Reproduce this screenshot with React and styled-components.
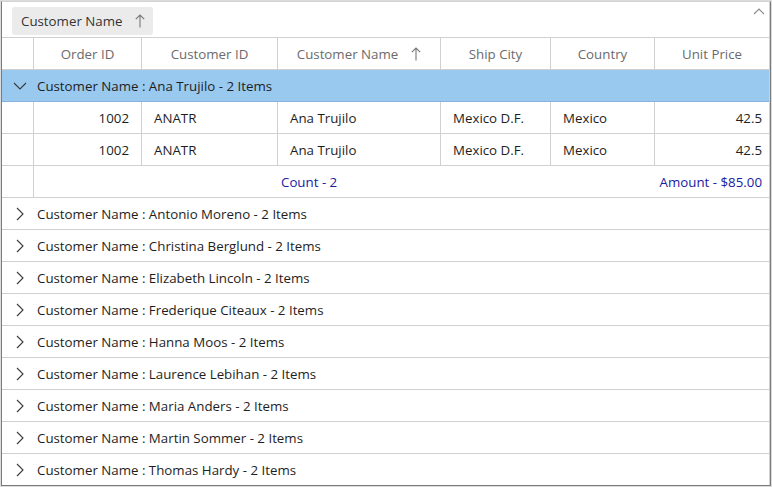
import React from "react";
import styled, { createGlobalStyle } from "styled-components";

const GlobalStyle = createGlobalStyle`
  html, body {
    margin: 0;
    padding: 0;
    background: #ffffff;
  }
  body {
    font-family: "Open Sans", "Noto Sans", sans-serif;
  }
`;

const COLUMNS = "32px 108px 136px 163px 110px 104px 114px";

const columns = [
  { key: "orderId", title: "Order ID", align: "right" },
  { key: "customerId", title: "Customer ID", align: "left" },
  { key: "customerName", title: "Customer Name", align: "left", sorted: true },
  { key: "shipCity", title: "Ship City", align: "left" },
  { key: "country", title: "Country", align: "left" },
  { key: "unitPrice", title: "Unit Price", align: "right" },
];

const groups = [
  "Ana Trujilo",
  "Antonio Moreno",
  "Christina Berglund",
  "Elizabeth Lincoln",
  "Frederique Citeaux",
  "Hanna Moos",
  "Laurence Lebihan",
  "Maria Anders",
  "Martin Sommer",
  "Thomas Hardy",
];

const expandedRows = [
  { orderId: 1002, customerId: "ANATR", customerName: "Ana Trujilo", shipCity: "Mexico D.F.", country: "Mexico", unitPrice: "42.5" },
  { orderId: 1002, customerId: "ANATR", customerName: "Ana Trujilo", shipCity: "Mexico D.F.", country: "Mexico", unitPrice: "42.5" },
];

const Frame = styled.div`
  width: 772px;
  height: 487px;
  box-sizing: border-box;
  border: 1px solid #dcdcdc;
  overflow: hidden;
`;

const Inner = styled.div`
  height: 100%;
  box-sizing: border-box;
  border-left: 1px solid #7a7a7a;
  border-right: 1px solid #7a7a7a;
  border-bottom: 1px solid #7a7a7a;
  border-top: 1px solid #d4d4d4;
  overflow: hidden;
  display: flex;
  flex-direction: column;
`;

const Body = styled.div`
  flex: 1;
  overflow: hidden;
  border-right: 1px solid #d0d0d0;
`;

const GroupDropArea = styled.div`
  height: 36px;
  flex-shrink: 0;
  box-sizing: border-box;
  border-bottom: 1px solid #d0d0d0;
  border-right: 1px solid #d0d0d0;
  display: flex;
  align-items: flex-start;
  padding: 5px 0 0 10px;
  position: relative;
`;

const GroupChip = styled.div`
  height: 28px;
  box-sizing: border-box;
  padding: 0 8px 0 9px;
  display: flex;
  align-items: center;
  gap: 13px;
  background: #ebebeb;
  border-radius: 3px;
  color: #333333;
  font-size: 13.3px;
`;

const CollapseCaret = styled.svg`
  position: absolute;
  top: 6px;
  right: 4px;
`;

const Row = styled.div`
  display: grid;
  grid-template-columns: ${COLUMNS};
  height: 32px;
  box-sizing: border-box;
  border-bottom: 1px solid #d0d0d0;
`;

const HeaderCell = styled.div`
  display: flex;
  align-items: center;
  justify-content: center;
  gap: 13px;
  color: #6b6b6b;
  font-size: 13.3px;
  border-right: 1px solid #d0d0d0;
  &:last-child {
    border-right: none;
  }
`;

const IndentCell = styled.div`
  border-right: 1px solid #d0d0d0;
`;

const Cell = styled.div`
  display: flex;
  align-items: center;
  justify-content: ${(p) => (p.$align === "right" ? "flex-end" : "flex-start")};
  padding: ${(p) => (p.$align === "right" ? "0 12px 0 0" : "0 0 0 12px")};
  color: #1e1e1e;
  font-size: 13.3px;
  border-right: 1px solid #d0d0d0;
  &:last-child {
    border-right: none;
    padding-right: 7px;
  }
`;

const SummaryRow = styled(Row)`
  color: #1a1aa5;
  font-size: 13.3px;
`;

const SummaryCount = styled.div`
  grid-column: 4 / 5;
  display: flex;
  align-items: center;
  padding-left: 3px;
`;

const SummaryAmount = styled.div`
  grid-column: 6 / 8;
  display: flex;
  align-items: center;
  justify-content: flex-end;
  padding-right: 7px;
`;

const GroupRow = styled.div`
  height: 32px;
  box-sizing: border-box;
  display: flex;
  align-items: center;
  background: ${(p) => (p.$selected ? "#99c9ee" : "#ffffff")};
  border-bottom: 1px solid ${(p) => (p.$selected ? "#86b2dc" : "#d0d0d0")};
  color: #1e1e1e;
  font-size: 13.3px;
`;

const Toggle = styled.span`
  width: 35px;
  display: flex;
  align-items: center;
  justify-content: center;
  flex-shrink: 0;
`;

const SortArrow = () => (
  <svg width="10" height="14" viewBox="0 0 10 14" fill="none" stroke="#777" strokeWidth="1.1">
    <path d="M5 13.5V1M0.8 5.2L5 1l4.2 4.2" />
  </svg>
);

const Chevron = ({ open }) =>
  open ? (
    <svg width="14" height="8" viewBox="0 0 14 8" fill="none" stroke="#3a3a3a" strokeWidth="1.1">
      <path d="M1 1l6 6 6-6" />
    </svg>
  ) : (
    <svg width="8" height="14" viewBox="0 0 8 14" fill="none" stroke="#3a3a3a" strokeWidth="1.1">
      <path d="M1 1l6 6-6 6" />
    </svg>
  );

export default function App() {
  return (
    <Frame>
      <GlobalStyle />
      <Inner>
        <GroupDropArea>
          <GroupChip>
            <span>Customer Name</span>
            <SortArrow />
          </GroupChip>
          <CollapseCaret width="12" height="7" viewBox="0 0 12 7" fill="none" stroke="#8a8a8a" strokeWidth="1.1">
            <path d="M1 6l5-5 5 5" />
          </CollapseCaret>
        </GroupDropArea>
        <Body>
          <Row>
            <IndentCell />
            {columns.map((c) => (
              <HeaderCell key={c.key}>
                <span>{c.title}</span>
                {c.sorted && <SortArrow />}
              </HeaderCell>
            ))}
          </Row>
          {groups.map((name, i) => (
            <React.Fragment key={name}>
              <GroupRow $selected={i === 0}>
                <Toggle>
                  <Chevron open={i === 0} />
                </Toggle>
                <span>Customer Name : {name} - 2 Items</span>
              </GroupRow>
              {i === 0 && (
                <>
                  {expandedRows.map((r, j) => (
                    <Row key={j}>
                      <IndentCell />
                      {columns.map((c) => (
                        <Cell key={c.key} $align={c.align}>
                          {r[c.key]}
                        </Cell>
                      ))}
                    </Row>
                  ))}
                  <SummaryRow>
                    <IndentCell />
                    <SummaryCount>Count - 2</SummaryCount>
                    <SummaryAmount>Amount - $85.00</SummaryAmount>
                  </SummaryRow>
                </>
              )}
            </React.Fragment>
          ))}
        </Body>
      </Inner>
    </Frame>
  );
}
